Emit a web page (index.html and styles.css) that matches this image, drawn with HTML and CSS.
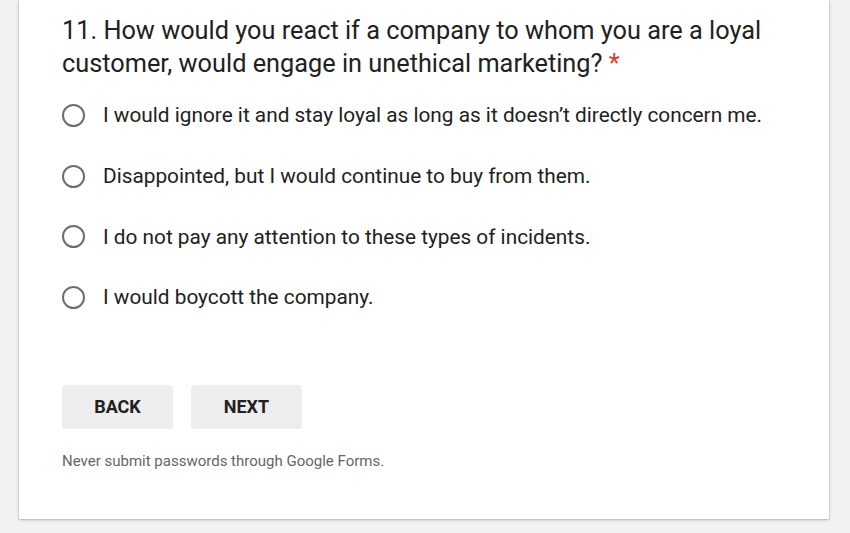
FILE: index.html
```html
<!DOCTYPE html>
<html>
<head>
<meta charset="utf-8">
<link rel="stylesheet" href="styles.css">
</head>
<body>
<div class="page">
  <div class="card">
    <div class="question">11. How would you react if a company to whom you are a loyal customer, would engage in unethical marketing? <span class="req">*</span></div>
    <div class="options">
      <div class="option"><span class="radio"></span><span class="label">I would ignore it and stay loyal as long as it doesn’t directly concern me.</span></div>
      <div class="option"><span class="radio"></span><span class="label">Disappointed, but I would continue to buy from them.</span></div>
      <div class="option"><span class="radio"></span><span class="label">I do not pay any attention to these types of incidents.</span></div>
      <div class="option"><span class="radio"></span><span class="label">I would boycott the company.</span></div>
    </div>
    <div class="buttons">
      <button class="btn">BACK</button>
      <button class="btn">NEXT</button>
    </div>
    <div class="note">Never submit passwords through Google Forms.</div>
  </div>
</div>
</body>
</html>
```
FILE: styles.css
```css
html, body {
  margin: 0;
  padding: 0;
  background: #f2f2f2;
  font-family: Roboto, "Liberation Sans", Arial, sans-serif;
}
.page {
  width: 850px;
  height: 533px;
  overflow: hidden;
}
.card {
  margin-left: 19px;
  width: 810px;
  height: 519px;
  background: #fff;
  box-shadow: 0 1px 3px rgba(0,0,0,0.25), 0 0 1px rgba(0,0,0,0.2);
  box-sizing: border-box;
  padding: 14px 43px 0 43px;
}
.question {
  font-size: 25.3px;
  line-height: 33px;
  color: #212121;
}
.req {
  color: #d23f31;
}
.options {
  margin-top: 5px;
  display: flex;
  flex-direction: column;
}
.option {
  display: flex;
  align-items: center;
  height: 60.7px;
}
.radio {
  width: 19px;
  height: 19px;
  border: 2px solid #6e6e6e;
  border-radius: 50%;
  margin-right: 18px;
  flex: none;
}
.label {
  font-size: 20.8px;
  color: #212121;
}
.buttons {
  margin-top: 57px;
  display: flex;
  gap: 18px;
}
.btn {
  width: 111px;
  height: 44px;
  background: #eeeeee;
  border: none;
  border-radius: 3px;
  font-family: Roboto, "Liberation Sans", Arial, sans-serif;
  font-weight: bold;
  font-size: 18px;
  color: #212121;
  padding: 0;
}
.note {
  margin-top: 23px;
  font-size: 15px;
  color: #666;
}
```
